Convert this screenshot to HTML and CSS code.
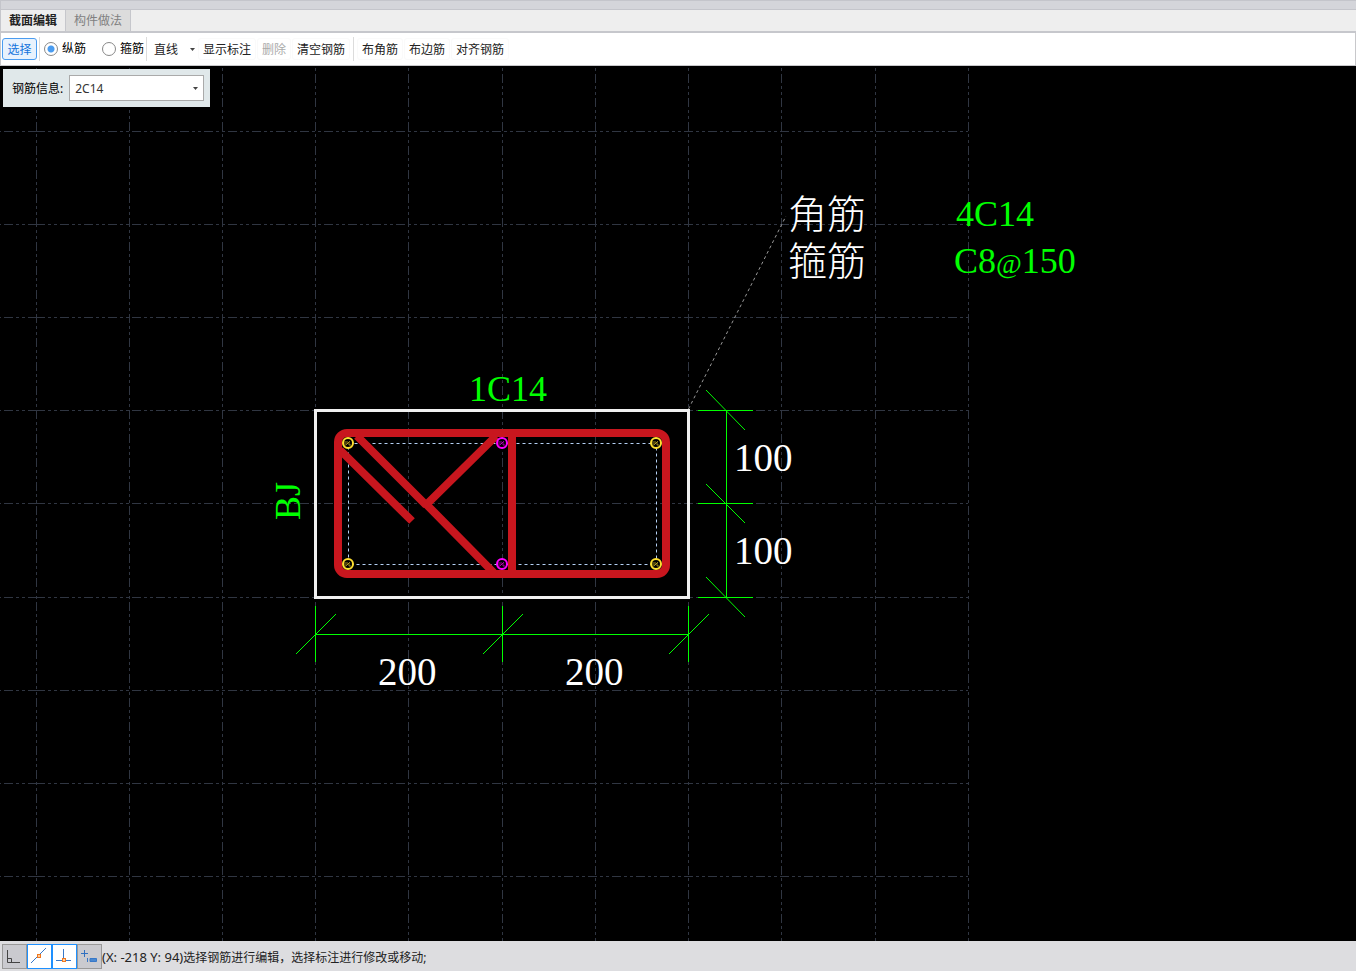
FILE: index.html
```html
<!DOCTYPE html>
<html lang="zh-CN">
<head>
<meta charset="utf-8">
<title>截面编辑</title>
<link rel="stylesheet" href="styles.css">
</head>
<body>
<div class="app">
  <div class="grip"></div>
  <nav class="tabs">
    <button class="tab tab-active">截面编辑</button>
    <button class="tab">构件做法</button>
  </nav>
  <div class="toolbar">
    <button class="tool tool-on">选择</button>
    <span class="sep"></span>
    <label class="radio"><input type="radio" name="bar" checked>纵筋</label>
    <label class="radio"><input type="radio" name="bar">箍筋</label>
    <span class="sep"></span>
    <span class="pick pick-line">
      <select class="line-select" aria-label="绘制方式"><option>直线</option></select>
      <svg class="caret" viewBox="0 0 5 3"><path d="M0 0H5L2.500 3Z"/></svg>
    </span>
    <button class="tool">显示标注</button>
    <button class="tool" disabled>删除</button>
    <button class="tool">清空钢筋</button>
    <span class="sep sep-wide"></span>
    <button class="tool">布角筋</button>
    <button class="tool">布边筋</button>
    <button class="tool">对齐钢筋</button>
  </div>
  <main class="canvas">
    <svg class="drawing" role="img" aria-label="截面配筋图">
      <defs>
        <g id="bar">
          <circle r="5" fill="#000" stroke="currentColor" stroke-width="2"/>
          <path d="M-3 -2V3M-1 -2V1M1 -1V2H3M-2 2L2 -2" fill="none" stroke="currentColor" stroke-width="1" opacity=".6"/>
        </g>
      </defs>
      <g transform="translate(0 -66)">
        <g class="grid">
          <path d="M36 131.500H968M36 224.500H968M36 317.500H968M36 410.500H968M36 503.500H968M36 597.500H968M36 690.500H968M36 783.500H968M36 876.500H968"/>
          <path d="M37 131.500H0M37 224.500H0M37 317.500H0M37 410.500H0M37 503.500H0M37 597.500H0M37 690.500H0M37 783.500H0M37 876.500H0"/>
          <path d="M36.500 50V941M129.500 50V941M222.500 50V941M315.500 50V941M408.500 50V941M502.500 50V941M595.500 50V941M688.500 50V941M781.500 50V941M875.500 50V941M968.500 50V941"/>
        </g>
        <path d="M688.500 409L786 216" stroke="#999" stroke-dasharray="3 3" fill="none"/>
        <rect x="315.500" y="410.500" width="373" height="187" fill="none" stroke="#f0f0f0" stroke-width="3"/>
        <rect class="axis" x="348.500" y="443.500" width="308" height="121"/>
        <g class="stirrup">
          <rect x="338" y="433" width="328" height="141" rx="9"/>
          <path d="M512 433V574M340 450L412 521M425 503L495 574"/>
          <path d="M357 436L426 505L496 436" stroke-linejoin="bevel"/>
        </g>
        <use href="#bar" x="348" y="443" color="#ffe030"/>
        <use href="#bar" x="656" y="443" color="#ffe030"/>
        <use href="#bar" x="348" y="564" color="#ffe030"/>
        <use href="#bar" x="656" y="564" color="#ffe030"/>
        <use href="#bar" x="502" y="443" color="#f0f"/>
        <use href="#bar" x="502" y="564" color="#f0f"/>
        <g class="dims">
          <path d="M315.500 606V662M502.500 606V662M688.500 606V662M315 634.500H689"/>
          <path d="M698 410.500H753M698 503.500H753M698 597.500H753M726.500 410V598"/>
          <path d="M296 654L336 614M483 654L523 614M669 654L709 614M706 390L745 430M706 484L745 523M706 577L745 617"/>
        </g>
        <g class="note">
          <text x="788" y="228">角筋</text>
          <text x="788" y="275">箍筋</text>
        </g>
        <g class="size">
          <text x="734" y="471">100</text>
          <text x="734" y="564">100</text>
          <text x="378" y="685">200</text>
          <text x="565" y="685">200</text>
        </g>
        <g class="spec">
          <text x="956" y="226">4C14</text>
          <text x="954" y="273">C8<tspan class="at">@</tspan>150</text>
          <text x="469" y="401">1C14</text>
          <text transform="translate(300 520) rotate(-90)">BJ</text>
        </g>
      </g>
    </svg>
    <div class="info">
      <label for="rebar">钢筋信息:</label>
      <span class="pick">
        <select id="rebar" class="rebar-select"><option>2C14</option></select>
        <svg class="caret" viewBox="0 0 5 3"><path d="M0 0H5L2.500 3Z"/></svg>
      </span>
    </div>
  </main>
  <footer class="status">
    <button class="snap" aria-label="正交"><svg viewBox="0 0 23 23"><path d="M4.500 5V17.500H17M4.500 13.500H8.500V17.500" stroke="#444"/></svg></button>
    <button class="snap snap-on" aria-label="中点"><svg viewBox="0 0 23 23"><path d="M3 18L18 3" stroke="#3878c8"/><rect x="9.500" y="9.500" width="3" height="3" stroke="#f07820" fill="#ffd0a0"/></svg></button>
    <button class="snap snap-on" aria-label="垂点"><svg viewBox="0 0 23 23"><path d="M3 15.500H18M10.500 4V14" stroke="#3878c8"/><rect x="9.500" y="13.500" width="3" height="3" stroke="#f07820" fill="#ffd0a0"/></svg></button>
    <button class="snap" aria-label="动态输入"><svg viewBox="0 0 23 23"><path d="M3 8.500H10M6.500 5V12" stroke="#3070c0"/><path d="M12 13.500H18.500V16.500H12Z" stroke="#3878c8" fill="#4a88d0"/><path d="M9.500 13V17" stroke="#3878c8"/></svg></button>
    <span class="message"><span class="coords">(X: -218 Y: 94)</span>选择钢筋进行编辑，选择标注进行修改或移动;</span>
  </footer>
</div>
</body>
</html>
```
FILE: styles.css
```css
* { box-sizing: border-box; }
body {
  margin: 0;
  font: 12px/16px "Noto Sans", "Noto Sans CJK SC", sans-serif;
  color: #222;
}
button, select, input { font: inherit; color: inherit; margin: 0; }
.app { display: flex; flex-direction: column; height: 100vh; }
.grip {
  height: 10px;
  flex: none;
  background: #d4d5da;
  border: 1px solid #c4c5cb;
  border-right: 0;
}
.tabs {
  display: flex;
  flex: none;
  height: 23px;
  background: #eee;
  border-left: 1px solid #c6c7cc;
  border-bottom: 2px solid #c6c7cc;
}
.tab {
  width: 65px;
  padding: 1px 0 0;
  border: 0;
  border-right: 1px solid #c6c7cc;
  background: #dcdcdc;
  color: #808080;
}
.tab-active { background: #eee; color: #222; font-weight: bold; }
.toolbar {
  display: flex;
  flex: none;
  align-items: center;
  gap: 1px;
  height: 33px;
  padding-left: 1px;
  background: #fff;
  border: 1px solid #c8c8cb;
  border-top: 0;
}
.tool {
  height: 22px;
  padding: 2px 4px 0;
  border: 1px solid #fafafa;
  border-radius: 3px;
  background: #fff;
  white-space: nowrap;
}
.tool:disabled { color: #aaa; }
.tool-on {
  width: 35px;
  border-color: #4a9cf0;
  background: #e8f2fd;
  color: #1474dc;
}
.sep { width: 1px; height: 24px; margin: 0 1px; background: #dcdcdc; }
.sep-wide { margin: 0 2px; }
.radio {
  display: flex;
  align-items: center;
  gap: 4px;
  padding-left: 2px;
  color: #000;
}
.radio + .radio { padding-left: 15px; }
.radio input {
  appearance: none;
  width: 14px;
  height: 14px;
  border: 1px solid #888;
  border-radius: 50%;
  background: #fff;
}
.radio input:checked {
  background: radial-gradient(circle, #4a9cf0 3px, #fff 4px);
}
.pick { display: grid; align-items: center; }
.pick > * { grid-area: 1 / 1; }
.pick select { appearance: none; border: 0; background: #fff; }
.caret {
  width: 5px;
  height: 3px;
  justify-self: end;
  fill: #444;
  pointer-events: none;
  margin-right: 6px;
}
.pick-line .caret { margin-right: 2px; }
.pick .line-select { width: 47px; height: 22px; padding: 2px 4px 0; }
.pick-line { padding-left: 1px; }
.canvas { position: relative; flex: 1; min-height: 0; background: #000; }
.drawing { display: block; width: 100%; height: 100%; }
.info {
  position: absolute;
  left: 3px;
  top: 3px;
  display: flex;
  align-items: center;
  gap: 6px;
  padding: 6px 6px 6px 9px;
  background: #e0e8ea;
  color: #000;
}
.info label { padding-top: 2px; }
.pick .rebar-select {
  width: 135px;
  height: 26px;
  padding: 2px 5px 0;
  border: 1px solid #aaa;
  color: #333;
}
.grid { fill: none; stroke: #303642; stroke-dasharray: 9 3 3 3 3 3; }
.axis { fill: none; stroke: #b4d0f4; stroke-dasharray: 3 3; }
.stirrup { fill: none; stroke: #c8161e; stroke-width: 8; }
.dims { fill: none; stroke: #0f0; }
.note {
  font: 300 39px "Noto Sans CJK SC", sans-serif;
  fill: #fff;
}
.size { font: 39px "Liberation Serif", serif; fill: #fff; }
.spec { font: 36px "Liberation Serif", serif; fill: #0f0; }
.at { font-size: 28px; }
.status {
  display: flex;
  flex: none;
  align-items: center;
  height: 30px;
  padding-left: 2px;
  background: #dddde0;
}
.message { padding-top: 2px; }
.coords { font-size: 13px; }
.snap {
  width: 25px;
  height: 25px;
  padding: 0;
  border: 1px solid #999;
  background: #cacacf;
}
.snap-on { border-color: #1e90ff; background: #fff; }
.snap svg { display: block; width: 23px; height: 23px; fill: none; }
```
